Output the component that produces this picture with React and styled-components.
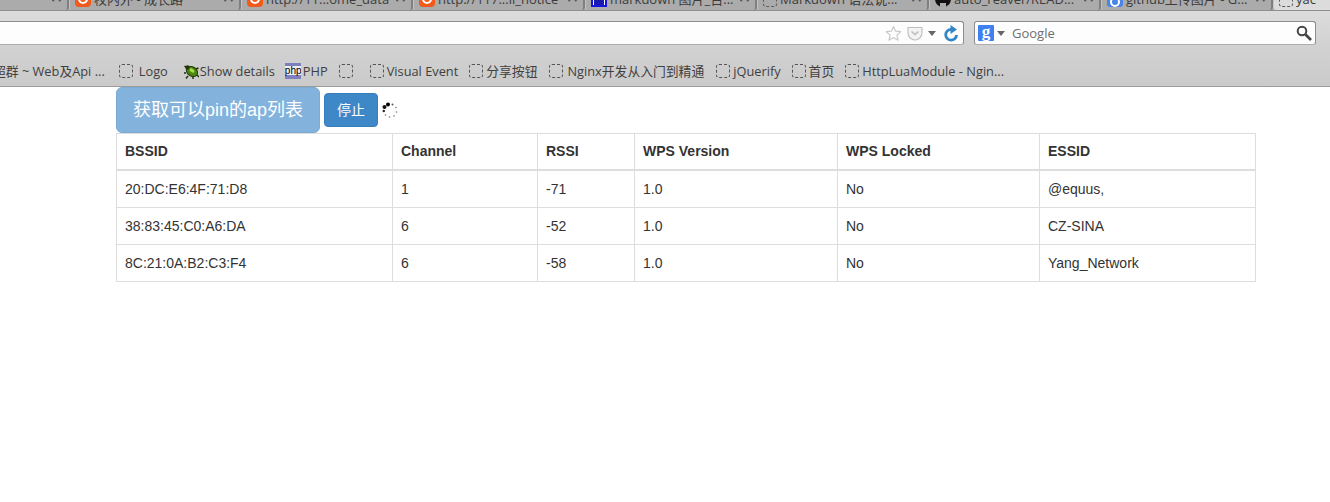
import React from "react";
import styled, { createGlobalStyle } from "styled-components";

const Global = createGlobalStyle`
  html, body { margin: 0; padding: 0; background: #fff; }
  body { width: 1330px; height: 502px; overflow: hidden; font-family: "Liberation Sans", "Noto Sans CJK SC", sans-serif; }
`;

const UIFONT = `"Open Sans", "Noto Sans CJK SC", sans-serif`;

const Chrome = styled.header`
  display: flex;
  flex-direction: column;
  height: 87px;
  overflow: hidden;
`;

const TabStrip = styled.div`
  display: flex;
  height: 23px;
  flex: none;
  margin-top: -12px;
  margin-left: -103px;
  background: #aaaaaa;
  border-bottom: 1px solid #8f8f8f;
  box-sizing: border-box;
`;

const Tab = styled.div`
  display: flex;
  align-items: flex-end;
  flex: none;
  box-sizing: border-box;
  width: 172px;
  height: 22px;
  padding: 0 6px 3px 5px;
  gap: 3px;
  border-right: 2px solid #7f7f7f;
  border-left: 1px solid #c4c4c4;
  background: ${p => (p.$active ? "#dcdcdc" : "#ababab")};
  border-radius: 0 0 3px 3px;
  font: 13px/18px ${UIFONT};
  color: #3c3c3c;
  white-space: nowrap;
`;

const TabLabel = styled.span`
  flex: 1;
  overflow: hidden;
  position: relative;
  top: 1px;
`;

const TabClose = styled.svg`
  flex: none;
  width: 9px;
  height: 18px;
  color: #555;
`;

const FavBox = styled.span`
  display: block;
  flex: none;
  box-sizing: border-box;
  width: 16px;
  height: 16px;
`;

const OrangeFav = styled(FavBox)`
  border-radius: 4px;
  background: #f25a1b;
  display: flex;
  align-items: center;
  justify-content: center;
  &::after {
    content: "";
    display: block;
    width: 6px;
    height: 6px;
    border: 2px solid #fff;
    border-radius: 50%;
  }
`;

const BlueFav = styled(FavBox)`
  border: 2px solid #1414e0;
  background: #fff;
  display: flex;
  justify-content: center;
  align-items: flex-end;
  &::after {
    content: "";
    display: block;
    width: 10px;
    height: 7px;
    background: #1a1ab0;
    border-radius: 3px 3px 0 0;
  }
`;

const DashFav = styled(FavBox)`
  width: 14px;
  height: 14px;
  border: 1px dashed #5c5c5c;
  border-radius: 3px;
`;

const GitFav = styled(FavBox)`
  border-radius: 50%;
  background: #111;
  display: flex;
  justify-content: center;
  align-items: flex-end;
  &::after {
    content: "";
    display: block;
    width: 6px;
    height: 4px;
    background: #ababab;
  }
`;

const GoogleFav = styled(FavBox)`
  border-radius: 3px;
  background: #4a86e8;
  display: flex;
  justify-content: center;
  align-items: flex-end;
  &::after {
    content: "";
    display: block;
    width: 6px;
    height: 6px;
    border: 2px solid #fff;
    border-radius: 50%;
  }
`;

const NavBar = styled.div`
  display: flex;
  align-items: flex-start;
  flex: none;
  box-sizing: border-box;
  height: 34px;
  padding-top: 10px;
  background: linear-gradient(#dcdcdc 0, #d9d9d9 10px, #d2d2d2 100%);
`;

const UrlBar = styled.div`
  display: flex;
  align-items: center;
  justify-content: flex-end;
  box-sizing: border-box;
  width: 968px;
  height: 24px;
  margin-left: -4px;
  padding-right: 4px;
  gap: 5px;
  background: #fdfdfd;
  border: 1px solid #8d8d8d;
  border-bottom-color: #adadad;
  border-radius: 3px;
`;

const SearchBar = styled.div`
  display: flex;
  align-items: center;
  box-sizing: border-box;
  width: 342px;
  height: 24px;
  margin-left: 10px;
  padding: 0 3px;
  background: #fdfdfd;
  border: 1px solid #8d8d8d;
  border-bottom-color: #adadad;
  border-radius: 3px;
  font: 13px ${UIFONT};
  color: #6f6f6f;
`;

const GBadge = styled.span`
  display: flex;
  align-items: center;
  justify-content: center;
  flex: none;
  width: 16px;
  height: 16px;
  background: #3f7ff0;
  border-radius: 1px;
  color: #fff;
  font: bold 17px/14px "Liberation Serif", serif;
  padding-bottom: 2px;
  box-sizing: border-box;
`;

const Caret = styled.span`
  flex: none;
  width: 0;
  height: 0;
  border-left: 4px solid transparent;
  border-right: 4px solid transparent;
  border-top: 5px solid #666;
`;

const UrlCaret = styled(Caret)`
  margin-right: 3px;
`;

const SearchCaret = styled(Caret)`
  margin-left: 3px;
`;

const SearchText = styled.span`
  flex: 1;
  margin-left: 7px;
`;

const IconSvg = styled.svg`
  flex: none;
  display: block;
`;

const Bookmarks = styled.nav`
  display: flex;
  align-items: center;
  flex: none;
  box-sizing: border-box;
  height: 42px;
  padding: 11px 0 0 0;
  background: linear-gradient(#d2d2d2, #cacaca);
  border-bottom: 1px solid #9c9c9c;
  font: 12.8px/18px ${UIFONT};
  color: #3f3f3f;
  white-space: nowrap;
`;

const Bookmark = styled.span`
  display: flex;
  align-items: center;
  flex: none;
  gap: ${p => p.$gap ?? 3}px;
  margin-right: ${p => p.$after ?? 11}px;
  margin-left: ${p => p.$start ?? 0}px;
`;

const PhpIcon = styled.span`
  display: block;
  flex: none;
  width: 16px;
  height: 16px;
  background: linear-gradient(#7f7fbd 0 3px, #eeeef6 3px 12px, #7f7fbd 12px);
  color: #000;
  font: 10px/15px "Liberation Sans", sans-serif;
  text-align: center;
  overflow: hidden;
`;

const BlankIcon = styled.span`
  display: block;
  flex: none;
  box-sizing: border-box;
  width: 14px;
  height: 14px;
  border: 1px dashed #555;
  border-radius: 3px;
`;

const Page = styled.main`
  padding-left: 116px;
  width: 1139px;
`;

const Actions = styled.div`
  display: flex;
  align-items: center;
  gap: 4px;
  height: 46px;
`;

const LoadButton = styled.button`
  box-sizing: border-box;
  height: 46px;
  width: 204px;
  padding: 0;
  white-space: nowrap;
  font: 18px/24px "Liberation Sans", "Noto Sans CJK SC", sans-serif;
  color: #fff;
  background: #428bca;
  border: 1px solid #357ebd;
  border-radius: 6px;
  opacity: 0.65;
  margin: 0;
`;

const StopButton = styled.button`
  box-sizing: border-box;
  height: 34px;
  width: 54px;
  padding: 0;
  font: 14px/20px "Liberation Sans", "Noto Sans CJK SC", sans-serif;
  color: #fff;
  background: #3f88c8;
  border: 1px solid #357ebd;
  border-radius: 4px;
  margin: 0;
`;

const Table = styled.table`
  border-collapse: collapse;
  width: 1139px;
  table-layout: fixed;
  font: 14px/20px "Liberation Sans", sans-serif;
  color: #333;
`;

const Th = styled.th`
  box-sizing: border-box;
  text-align: left;
  padding: 7px 8px;
  border: 1px solid #ddd;
  border-bottom-width: 2px;
  height: 36px;
  font-weight: bold;
`;

const Td = styled.td`
  box-sizing: border-box;
  padding: 8px;
  border: 1px solid #ddd;
  height: 37px;
`;

const cols = [276, 145, 97, 203, 202, 216];
const heads = ["BSSID", "Channel", "RSSI", "WPS Version", "WPS Locked", "ESSID"];
const rows = [
  ["20:DC:E6:4F:71:D8", "1", "-71", "1.0", "No", "@equus,"],
  ["38:83:45:C0:A6:DA", "6", "-52", "1.0", "No", "CZ-SINA"],
  ["8C:21:0A:B2:C3:F4", "6", "-58", "1.0", "No", "Yang_Network"],
];

const tabs = [
  { label: "校内...", fav: OrangeFav },
  { label: "校内外 - 成长路", fav: OrangeFav },
  { label: "http://11...ome_data", fav: OrangeFav },
  { label: "http://117...ll_notice", fav: OrangeFav },
  { label: "markdown 图片_百...", fav: BlueFav },
  { label: "Markdown 语法说...", fav: DashFav },
  { label: "auto_reaver/READ...", fav: GitFav },
  { label: "github上传图片 - G...", fav: GoogleFav },
  { label: "yac", fav: DashFav, active: true },
];

const Close = () => (
  <TabClose viewBox="0 0 9 18">
    <path d="M0.5 4 L8.5 12 M8.5 4 L0.5 12" stroke="currentColor" strokeWidth="1.8" fill="none" />
  </TabClose>
);

const Beetle = () => (
  <IconSvg width="15" height="15" viewBox="0 0 15 15">
    <path d="M3 4 L0.5 2 M2 9 L0 9 M4 12 L2 14.5 M9 13 L9 15 M13 11 L15 13 M12 5 L14.5 4" stroke="#1f2a0a" strokeWidth="1.4" />
    <ellipse cx="8" cy="7.5" rx="6" ry="4.6" transform="rotate(35 8 7.5)" fill="#4a8a0e" stroke="#26380a" strokeWidth="1" />
    <ellipse cx="8" cy="6.5" rx="2.8" ry="1.6" transform="rotate(35 8 6.5)" fill="#a9dc4c" />
    <circle cx="3.5" cy="3.5" r="2.2" fill="#26380a" />
  </IconSvg>
);

const Star = () => (
  <IconSvg width="17" height="17" viewBox="0 0 17 17">
    <path d="M8.5 1.5 L10.6 6.2 L15.7 6.7 L11.9 10.1 L13 15.2 L8.5 12.6 L4 15.2 L5.1 10.1 L1.3 6.7 L6.4 6.2 Z" fill="#fdfdfd" stroke="#c9c9c9" strokeWidth="1.2" strokeLinejoin="round" />
  </IconSvg>
);

const Pocket = () => (
  <IconSvg width="16" height="16" viewBox="0 0 16 16">
    <path d="M1 2.5 H15 V8 C15 12 11.5 15 8 15 C4.5 15 1 12 1 8 Z" fill="#f3f3f3" stroke="#bdbdbd" strokeWidth="1.1" strokeLinejoin="round" />
    <path d="M4.5 6.5 L8 9.5 L11.5 6.5" fill="none" stroke="#bdbdbd" strokeWidth="1.6" />
  </IconSvg>
);

const Reload = () => (
  <IconSvg width="15" height="17" viewBox="0 0 15 17">
    <path d="M12.5 10 A5.4 5.4 0 1 1 7.5 4.4" fill="none" stroke="#2f86c9" strokeWidth="2.8" />
    <path d="M6.5 0 L13 4.5 L6.5 9 Z" fill="#2f86c9" />
  </IconSvg>
);

const Magnifier = () => (
  <IconSvg width="16" height="16" viewBox="0 0 16 16">
    <circle cx="6" cy="6" r="4.3" fill="none" stroke="#444" strokeWidth="2" />
    <path d="M9.5 9.5 L15 15" stroke="#444" strokeWidth="2.6" />
  </IconSvg>
);

const Spinner = () => (
  <IconSvg width="16" height="16" viewBox="0 0 16 16">
    <circle cx="6" cy="2.5" r="2" fill="#000" />
    <circle cx="2.5" cy="5" r="2" fill="#111" />
    <circle cx="1.8" cy="9" r="1.2" fill="#222" />
    <circle cx="10.5" cy="2.5" r="1" fill="#555" />
    <circle cx="14" cy="5.5" r="0.8" fill="#777" />
    <circle cx="14.5" cy="10" r="0.8" fill="#777" />
    <circle cx="12" cy="14" r="0.8" fill="#777" />
    <circle cx="7.5" cy="15" r="0.8" fill="#777" />
    <circle cx="3.5" cy="13" r="0.8" fill="#777" />
  </IconSvg>
);

export default function App() {
  return (
    <>
      <Global />
      <Chrome>
        <TabStrip>
          {tabs.map(t => {
            const Fav = t.fav;
            return (
              <Tab key={t.label} $active={t.active}>
                <Fav />
                <TabLabel>{t.label}</TabLabel>
                {!t.active && <Close />}
              </Tab>
            );
          })}
        </TabStrip>
        <NavBar>
          <UrlBar>
            <Star />
            <Pocket />
            <UrlCaret />
            <Reload />
          </UrlBar>
          <SearchBar>
            <GBadge>g</GBadge>
            <SearchCaret />
            <SearchText>Google</SearchText>
            <Magnifier />
          </SearchBar>
        </NavBar>
        <Bookmarks>
          <Bookmark $start={-7} $after={14}>超群 ~ Web及Api ...</Bookmark>
          <Bookmark $gap={6} $after={16}><BlankIcon />Logo</Bookmark>
          <Bookmark $gap={1} $after={10}><Beetle />Show details</Bookmark>
          <Bookmark $after={11} $gap={2}><PhpIcon>php</PhpIcon>PHP</Bookmark>
          <Bookmark $after={17}><BlankIcon /></Bookmark>
          <Bookmark><BlankIcon />Visual Event</Bookmark>
          <Bookmark $after={12}><BlankIcon />分享按钮</Bookmark>
          <Bookmark $gap={4} $after={12}><BlankIcon />Nginx开发从入门到精通</Bookmark>
          <Bookmark><BlankIcon />jQuerify</Bookmark>
          <Bookmark><BlankIcon />首页</Bookmark>
          <Bookmark><BlankIcon />HttpLuaModule - Ngin...</Bookmark>
        </Bookmarks>
      </Chrome>
      <Page>
        <Actions>
          <LoadButton>获取可以pin的ap列表</LoadButton>
          <StopButton>停止</StopButton>
          <Spinner />
        </Actions>
        <Table>
          <colgroup>
            {cols.map((w, i) => <col key={i} style={{ width: w }} />)}
          </colgroup>
          <thead>
            <tr>{heads.map(h => <Th key={h}>{h}</Th>)}</tr>
          </thead>
          <tbody>
            {rows.map(r => (
              <tr key={r[0]}>{r.map((c, i) => <Td key={i}>{c}</Td>)}</tr>
            ))}
          </tbody>
        </Table>
      </Page>
    </>
  );
}
